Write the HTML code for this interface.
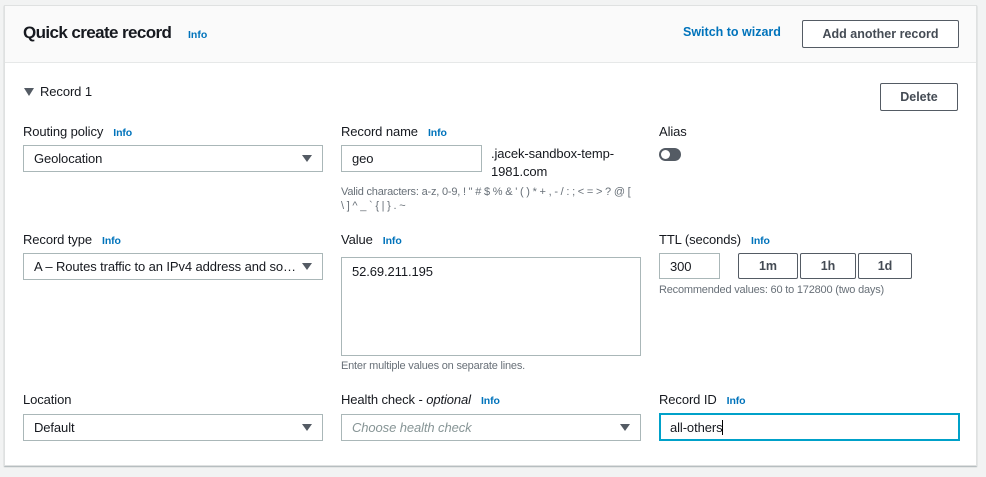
<!DOCTYPE html>
<html><head><style>
*{box-sizing:border-box;margin:0;padding:0}
body{width:986px;height:477px;background:#f2f3f3;font-family:"Liberation Sans",sans-serif;position:relative;overflow:hidden;color:#16191f}
.a{position:absolute;white-space:nowrap}
.panel{position:absolute;left:4px;top:5px;width:973px;height:461px;background:#fff;border:1px solid #dfe1e1;box-shadow:0 1px 1px rgba(0,28,36,.3)}
.hdr{position:absolute;left:5px;top:6px;width:971px;height:57px;background:#fafafa;border-bottom:1px solid #e6e8e8}
.lbl{font-size:13px;letter-spacing:-.1px;color:#16191f}
.info{font-size:10.5px;font-weight:bold;color:#0073bb;margin-left:10px}
.box{position:absolute;border:1px solid #aab7b8;background:#fff;font-size:13px;letter-spacing:-.1px;padding-left:10px;display:flex;align-items:center}
.arr{position:absolute;right:10px;top:9px;width:0;height:0;border-left:5px solid transparent;border-right:5px solid transparent;border-top:7px solid #545b64}
.btn{position:absolute;border:1px solid #545b64;background:#fff;font-weight:bold;font-size:12.5px;color:#444b54;display:flex;align-items:center;justify-content:center;border-radius:2px}
.help{font-size:11px;color:#687078;letter-spacing:-.2px}
</style></head><body>
<div class="panel"></div>
<div class="hdr"></div>
<div class="a" style="left:23px;top:23px;font-size:17px;font-weight:bold;letter-spacing:-.6px">Quick create record</div>
<div class="a" style="left:188px;top:29px;font-size:10.5px;font-weight:bold;color:#0073bb">Info</div>
<div class="a" style="left:683px;top:25px;font-size:12.5px;font-weight:bold;color:#0073bb">Switch to wizard</div>
<div class="btn" style="left:802px;top:20px;width:157px;height:28px">Add another record</div>

<div class="a" style="left:24px;top:88px;width:0;height:0;border-left:5px solid transparent;border-right:5px solid transparent;border-top:8px solid #545b64"></div>
<div class="a lbl" style="left:40px;top:84px">Record 1</div>
<div class="btn" style="left:880px;top:83px;width:78px;height:28px">Delete</div>

<div class="a lbl" style="left:23px;top:124px">Routing policy<span class="info">Info</span></div>
<div class="a lbl" style="left:341px;top:124px">Record name<span class="info">Info</span></div>
<div class="a lbl" style="left:659px;top:124px">Alias</div>
<div class="box" style="left:23px;top:145px;width:300px;height:27px">Geolocation<div class="arr"></div></div>
<div class="box" style="left:341px;top:145px;width:141px;height:27px">geo</div>
<div class="a lbl" style="left:491px;top:145px;line-height:18px">.jacek-sandbox-temp-<br>1981.com</div>
<div class="a help" style="left:341px;top:185px;line-height:14px">Valid characters: a-z, 0-9, ! " # $ % &amp; ' ( ) * + , - / : ; &lt; = &gt; ? @ [<br>\ ] ^ _ ` { | } . ~</div>
<div class="a" style="left:659px;top:148px;width:22px;height:13px;border-radius:7px;background:#545b64"></div>
<div class="a" style="left:661px;top:150px;width:9px;height:9px;border-radius:50%;background:#fff"></div>

<div class="a lbl" style="left:23px;top:232px">Record type<span class="info">Info</span></div>
<div class="a lbl" style="left:341px;top:232px">Value<span class="info">Info</span></div>
<div class="a lbl" style="left:659px;top:232px">TTL (seconds)<span class="info">Info</span></div>
<div class="box" style="left:23px;top:253px;width:300px;height:27px">A – Routes traffic to an IPv4 address and so…<div class="arr"></div></div>
<div class="box" style="left:341px;top:257px;width:300px;height:99px;align-items:flex-start;padding-top:6px">52.69.211.195</div>
<div class="a help" style="left:341px;top:360px">Enter multiple values on separate lines.</div>
<div class="box" style="left:659px;top:253px;width:61px;height:26px">300</div>
<div class="btn" style="left:738px;top:253px;width:60px;height:26px">1m</div>
<div class="btn" style="left:800px;top:253px;width:56px;height:26px">1h</div>
<div class="btn" style="left:858px;top:253px;width:54px;height:26px">1d</div>
<div class="a help" style="left:659px;top:284px">Recommended values: 60 to 172800 (two days)</div>

<div class="a lbl" style="left:23px;top:392px">Location</div>
<div class="a lbl" style="left:341px;top:392px">Health check - <i>optional</i><span class="info">Info</span></div>
<div class="a lbl" style="left:659px;top:392px">Record ID<span class="info">Info</span></div>
<div class="box" style="left:23px;top:414px;width:300px;height:27px">Default<div class="arr"></div></div>
<div class="box" style="left:341px;top:414px;width:300px;height:27px;color:#879596;font-style:italic">Choose health check<div class="arr"></div></div>
<div class="box" style="left:659px;top:413px;width:301px;height:28px;border:2px solid #00a1c9;padding-left:9px">all-others<span style="display:inline-block;width:1px;height:15px;background:#000"></span></div>
</body></html>
